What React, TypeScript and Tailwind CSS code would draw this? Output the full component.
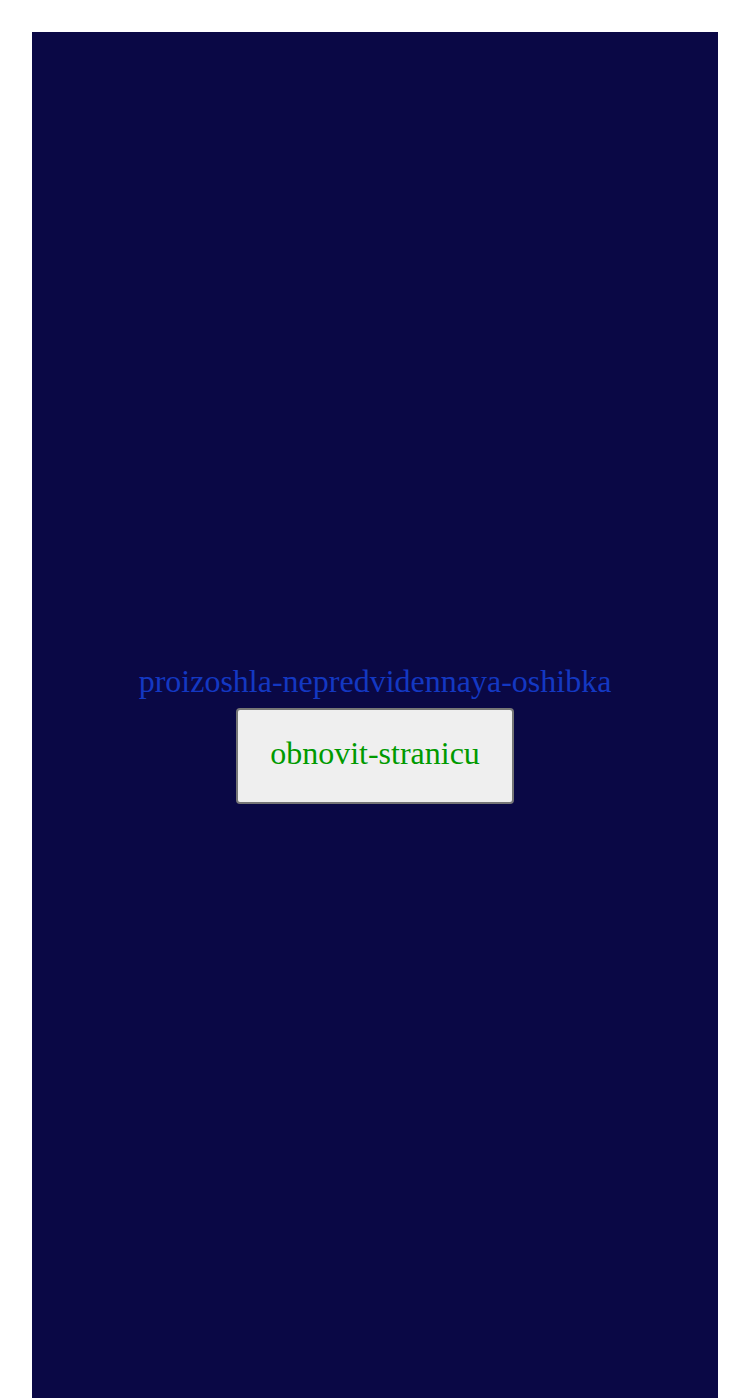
import React from 'react';

const App: React.FC = () => {
  return (
    <div className="min-h-screen bg-white p-8 pb-0">
      {/* Error panel */}
      <div className="flex h-[1402px] flex-col items-center justify-center bg-[#0a0845] font-['Liberation_Serif',serif]">
        <p className="pt-px text-[32px] leading-[37px] text-[#1438c2]">proizoshla-nepredvidennaya-oshibka</p>
        <button
          type="button"
          className="mt-[8px] rounded-[4px] border-2 border-[#767676] bg-[#efefef] px-8 pt-[25px] pb-[30px] text-[32px] leading-[37px] text-[#009a00]"
        >
          obnovit-stranicu
        </button>
      </div>
    </div>
  );
};

export default App;
